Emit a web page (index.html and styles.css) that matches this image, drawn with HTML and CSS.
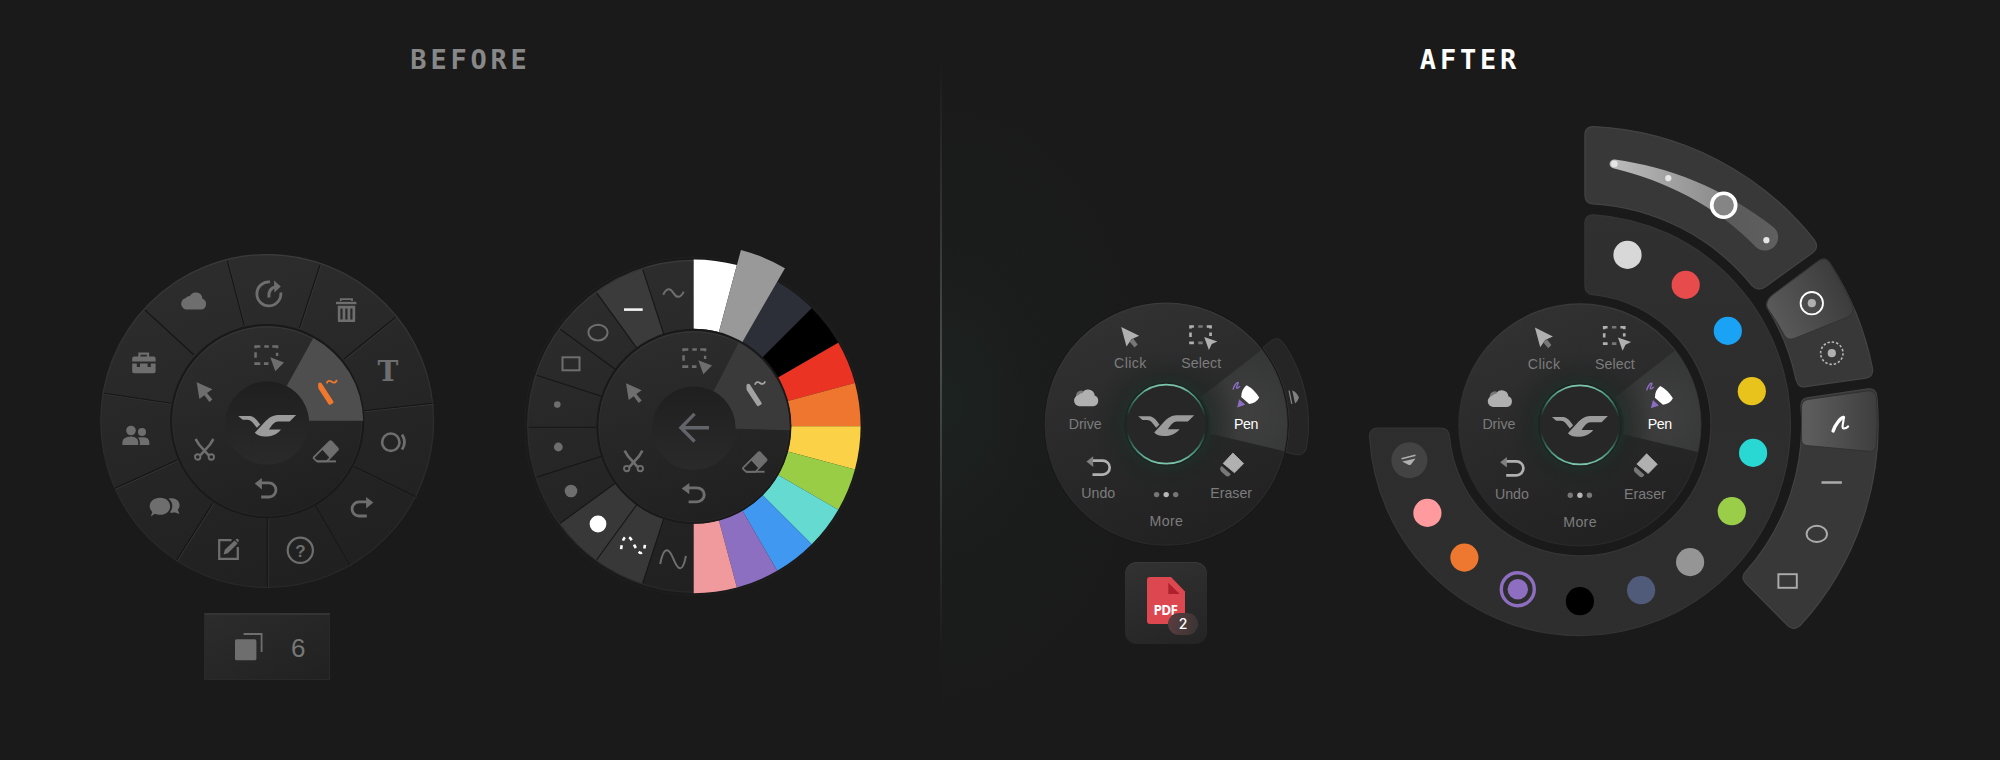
FILE: index.html
```html
<!DOCTYPE html>
<html lang="en">
<head>
<meta charset="utf-8">
<title>Radial menu: before and after</title>
<link rel="stylesheet" href="styles.css">
</head>
<body>

<svg class="defs" width="0" height="0" aria-hidden="true">
  <defs>
    <linearGradient id="disc" x1="0.3" y1="0" x2="0.6" y2="1"><stop offset="0" stop-color="#2d2d2d"/><stop offset="1" stop-color="#202020"/></linearGradient>
    <linearGradient id="knob" x1="0" y1="0" x2="0" y2="1"><stop offset="0" stop-color="#1f1f1f"/><stop offset="1" stop-color="#2a2a2a"/></linearGradient>
    <linearGradient id="edge" x1="0" y1="0" x2="0" y2="1"><stop offset="0" stop-color="#3b3b3b"/><stop offset="0.6" stop-color="#2b2b2b"/><stop offset="1" stop-color="#282828"/></linearGradient>
    <linearGradient id="disc2" x1="0.25" y1="0" x2="0.65" y2="1"><stop offset="0" stop-color="#323232"/><stop offset="1" stop-color="#212121"/></linearGradient>
    <radialGradient id="halo" gradientUnits="userSpaceOnUse" cx="0" cy="0" r="74"><stop offset="0.54" stop-color="#1d3029" stop-opacity="0.8"/><stop offset="0.7" stop-color="#1f2624" stop-opacity="0.5"/><stop offset="1" stop-color="#242424" stop-opacity="0"/></radialGradient>
    <linearGradient id="ring" x1="0" y1="0" x2="0" y2="1"><stop offset="0" stop-color="#7cc7ac"/><stop offset="0.12" stop-color="#4fa088"/><stop offset="0.28" stop-color="#285a4a"/><stop offset="0.4" stop-color="#1f2a27"/><stop offset="0.6" stop-color="#1f2a27"/><stop offset="0.72" stop-color="#285a4a"/><stop offset="0.88" stop-color="#4fa088"/><stop offset="1" stop-color="#7cc7ac"/></linearGradient>
    <radialGradient id="wedge" gradientUnits="userSpaceOnUse" cx="84" cy="-10" r="62"><stop offset="0" stop-color="#3f3f3f"/><stop offset="1" stop-color="#353736"/></radialGradient>
    <linearGradient id="track" gradientUnits="userSpaceOnUse" x1="30" y1="0" x2="198" y2="0"><stop offset="0" stop-color="#bcbcbc"/><stop offset="0.68" stop-color="#8a8a8a"/><stop offset="0.68" stop-color="#5a5a5a"/><stop offset="1" stop-color="#5f5f5f"/></linearGradient>
    <linearGradient id="band" x1="0" y1="0" x2="0" y2="1"><stop offset="0" stop-color="#303030"/><stop offset="0.4" stop-color="#2d2d2d"/><stop offset="1" stop-color="#2e2e2e"/></linearGradient>
    <linearGradient id="selA" gradientUnits="userSpaceOnUse" x1="196" y1="-100" x2="266" y2="-134"><stop offset="0" stop-color="#5a5a5a"/><stop offset="1" stop-color="#3c3c3c"/></linearGradient>
    <linearGradient id="selB" x1="0" y1="0" x2="1" y2="0"><stop offset="0.1" stop-color="#5c5c5c"/><stop offset="1" stop-color="#3e3e3e"/></linearGradient>

    <g id="i-logo">
      <path d="M28,-9H10.7C3.3,-8.7 0,-4.7 -3.7,-.7L-12,8.3C-7.7,13.7 7.3,13.3 13.3,5H1.7C4,2 6.3,-2.7 10.7,-2.7H21.7Z"/>
      <path d="M-28,-8H-17C-12,-8 -9,-2.5 -6.7,.3L-10,3.5C-13.3,-.7 -15.3,-4.2 -19.3,-4.2H-23.7Z"/>
    </g>
    <g id="i-select">
      <path d="M0,0H6V2.4H2.5V3H0ZM10,0H14.5V2.4H10ZM18,0H24V3H21.6V2.4H18ZM0,7H2.5V12.4H0ZM21.6,7.5H24V10.6H21.6ZM0,17H6V19.6H0ZM9.6,17H14.2V19.6H9.6Z"/>
      <path d="M16,12L29.7,17.3L21,26Z"/>
    </g>
    <path id="i-cursor" d="M0,0L15.7,7L10.3,10.7L15.7,17.3L12.7,19.7L7.7,13L2.7,16.7Z"/>
    <g id="i-scissors" fill="none" stroke="currentColor">
      <path d="M14.5,16.2L5,5.5L1.6,0M6.5,16.2L16,5.5L19.4,0" stroke-width="2.6"/>
      <circle cx="3.7" cy="18" r="2.7" stroke-width="1.9"/><circle cx="17.3" cy="18" r="2.7" stroke-width="1.9"/>
    </g>
    <g id="i-eraser" stroke="currentColor" stroke-linejoin="round">
      <path d="M1,17.4L16.8,1.6Q17.8,.8 18.8,1.6L25,8.4Q25.6,9.2 25,10L14,21.4H4.4L1,18.4Z" fill="none" stroke-width="1.8"/>
      <path d="M9.5,9L17.8,1.2L25.2,9.2L17,17.4Z" stroke-width="1"/>
      <path d="M4.4,21.4H23.3" stroke-width="2"/>
    </g>
    <g id="i-undo">
      <path d="M0,5.6L7.2,0V11.4Z" stroke="none"/>
      <path d="M6.5,4.9H14.2A7 7 0 0 1 14.2,19H6.5" fill="none" stroke="currentColor" stroke-width="2.8"/>
    </g>
    <g id="i-pen">
      <path d="M.2,4.6Q1.8,2.6 3.6,4.2L15.4,22.6Q15.8,23.6 14.8,24.3L12.4,25.7Q11.2,26.2 10.6,25.2L.4,9.6Q0,8 .2,4.6Z" fill="currentColor"/>
      <path d="M8.6,4.4C9.6,1.4 11.8,1.2 13.7,2.7S17.4,4.2 18.9,1" fill="none" stroke="currentColor" stroke-width="1.8"/>
    </g>
    <path id="i-cloud" d="M5.7,18.2A5.6 5.6 0 0 1 4.7,7.1A4.5 4.5 0 0 1 8.6,5A6.5 6.5 0 0 1 20.8,7.6A5.5 5.5 0 0 1 19.4,18.2Z"/>

    <g id="hub">
      <circle r="121" fill="url(#disc2)" stroke="url(#edge)" stroke-width="1.2"/>
      <path d="M95.3,-74.4L35,-27.3A44.4 44.4 0 0 1 43.3,9.3L118,27A121 121 0 0 0 95.3,-74.4Z" fill="url(#wedge)"/>
      <circle r="74" fill="url(#halo)"/>
      <circle r="42" fill="#1f2322"/>
      <circle r="39.5" fill="#272727" stroke="url(#ring)" stroke-width="1.7"/>
      <use href="#i-logo" fill="#9b9b9b"/>
      <path d="M-45,-97.3L-27,-88.5L-34.7,-85L-39.7,-77.7Z" fill="#b0b0b0"/>
      <path d="M-36.7,-82.6L-33,-85.6L-28.5,-79.8L-31.7,-76.7Z" fill="#777"/>
      <path d="M23,-99H27.7V-96.4H25.6V-95.6H23ZM40.5,-99H45.7V-95.6H43V-96.4H40.5ZM23,-91.7H25.6V-87.3H23ZM43,-91.7H45.7V-88.3H43ZM23,-82.7H27.7V-80H23Z" fill="#b0b0b0"/>
      <path d="M32,-99H36.5V-96.4H32ZM32,-82.7H36.5V-80H32Z" fill="#777"/>
      <path d="M38,-87.3L51.2,-82.8L45.6,-80.2L42.7,-74.2Z" fill="#b0b0b0"/>
      <circle cx="-85" cy="-28.5" r="5.2" fill="#777"/>
      <use href="#i-cloud" transform="translate(-92.3,-36.2)" fill="#b0b0b0"/>
      <path d="M-79.7,37.3L-73,32V42.7Z" fill="#808080"/>
      <path d="M-73.3,36.4H-63.5A7 7 0 0 1 -63.5,50.4H-73.7" fill="none" stroke="#b0b0b0" stroke-width="2.7"/>
      <g fill="#777"><circle cx="-9.6" cy="70.4" r="2.7"/><circle cx="9.5" cy="70.4" r="2.7"/></g><circle cx="0" cy="70.4" r="2.7" fill="#b8b8b8"/>
      <path d="M66.7,28.8L77.4,39.3L68.3,48.6L57,39.2Z" fill="#b0b0b0" stroke="#b0b0b0" stroke-width=".8" stroke-linejoin="round"/>
      <path d="M55.5,41.8L64.5,49.8C63.5,52.4 61.3,52.9 59.3,51.4L55,47.4C53.4,45.8 53.6,43.4 55.5,41.8Z" fill="#777"/>
      <path d="M80.4,-39Q88,-35 93,-26.7Q90,-21 83,-20.2L75,-27.2Q75,-35 80.4,-39Z" fill="#fff"/>
      <path d="M73,-24.9L79,-19.4L71,-16.7Z" fill="#8e6ec4"/>
      <path d="M66.8,-34.6C67.5,-38.5 71,-42.6 72,-41.6C72.7,-40.5 69,-36.4 70.7,-36Q72.3,-36 73.8,-38" fill="none" stroke="#8e6ec4" stroke-width="1.4"/>
    </g>
  </defs>
</svg>

<main class="compare">
  <section class="panel panel-before">
    <h2 class="title">BEFORE</h2>
    <div class="stage stage-before">
      <div class="menu menu-main">
        <svg width="340" height="342" viewBox="97 250 340 342">
          <circle cx="267.2" cy="421" r="166.4" fill="url(#disc)" stroke="url(#edge)" stroke-width="1.2"/>
          <g stroke="#363636" transform="translate(.8,.8)">
            <path id="spokes" d="M227.3,260.7L244.3,325.7M320,265L299.3,328.3M395.7,317.3L344,359M432.7,403.3L364,410.7M415.7,496.7L354.3,466.7M350,565L316,506M267.3,587L267.3,518.3M176.7,560L212.7,503.3M115,488.3L177.3,460M104.3,393.3L170.7,403.3M145,310L194,355"/>
          </g>
          <use href="#spokes" stroke="#151515" stroke-width="1.1"/>
          <circle cx="267.2" cy="421" r="96" fill="url(#disc)" stroke="#191919" stroke-width="2.2"/>
          <circle cx="267.2" cy="421.4" r="94.6" fill="none" stroke="url(#edge)" stroke-width=".8"/>
          <path d="M313.3,338A96 96 0 0 1 363.2,420.7H309A42 42 0 0 0 286.7,386Z" fill="#4e4e4e"/>
          <circle cx="267.2" cy="423" r="41.8" fill="url(#knob)"/>
          <use href="#i-logo" transform="translate(267.2,424.2) scale(1.035)" fill="#9b9b9b"/>
          <g class="muted">
            <use href="#i-select" transform="translate(254.3,345.3)"/>
            <use href="#i-cursor" transform="translate(196.7,382.3)"/>
            <use href="#i-scissors" transform="translate(194,439)"/>
            <use href="#i-eraser" transform="translate(312.7,440)"/>
            <use href="#i-undo" transform="translate(254.7,478)"/>
            <use href="#i-undo" transform="translate(373.3,497) scale(-1,1)"/>
            <use href="#i-cloud" transform="translate(181,290.8) scale(1.03)"/>
            <!-- history -->
            <path d="M270,281.9A12 12 0 1 0 280.8,292.5" fill="none" stroke="currentColor" stroke-width="2.8"/>
            <path d="M269,297.5Q268,288 276.5,286.6" fill="none" stroke="currentColor" stroke-width="3"/>
            <path d="M274,280.6L280.8,286.4L274.4,292.4Z"/>
            <!-- trash -->
            <path d="M340.8,301V299.2H352V301" fill="none" stroke="currentColor" stroke-width="1.8"/>
            <path d="M336,301.8H356.4V304.2H336Z"/>
            <path fill-rule="evenodd" d="M337.8,305.8H355.2V321Q355.2,322 354.2,322H338.8Q337.8,322 337.8,321ZM340.4,308.4V319.4H342.6V308.4ZM345.3,308.4V319.4H347.5V308.4ZM350.3,308.4V319.4H352.5V308.4Z"/>
            <!-- toolbox -->
            <path d="M139.4,357V353.6H148V357" fill="none" stroke="currentColor" stroke-width="2.2"/>
            <path d="M132.2,361.6V358.4Q132.2,356.6 134,356.6H153.8Q155.6,356.6 155.6,358.4V361.6ZM132.2,363.4H136.8V367H140V363.4H147.6V367H150.8V363.4H155.6V371.4Q155.6,373.2 153.8,373.2H134Q132.2,373.2 132.2,371.4Z"/>
            <!-- people -->
            <circle cx="131" cy="430.5" r="4.8"/><circle cx="142" cy="432" r="4"/>
            <path d="M122.4,445V442Q123,436.7 131,436.6Q137.6,436.7 138.2,442V445ZM139.8,445V441.4Q139.4,439 138,437.6Q148.6,435.8 149.3,441.4V445Z"/>
            <!-- chat -->
            <path d="M160,497.8C173.5,497.8 173.5,515 160,514.8Q157,514.8 154.8,513.8L150.8,516.6L152.3,512C146.5,506 151,497.8 160,497.8Z"/>
            <path d="M168.6,498.6C177,496.4 182.6,504 177.8,509.6L179.4,514L174.4,512.2Q172.2,513 169.8,512.6C173.6,507.6 173,502.4 168.6,498.6Z"/>
            <!-- edit -->
            <path d="M231.5,540.2H219.2V558.8H237.8V547" fill="none" stroke="currentColor" stroke-width="2.2"/>
            <path d="M223.6,554.4L224.8,549.8L234.6,540.6L237.6,543.6L227.8,553.2ZM235.6,539.8L236.8,538.8Q238,538.6 238.6,539.6Q239.3,541 238.4,541.8L238,542.4Z"/>
            <!-- help -->
            <circle cx="300.3" cy="550.3" r="12.6" fill="none" stroke="currentColor" stroke-width="2.2"/>
            <!-- laser -->
            <circle cx="390.8" cy="442.2" r="8.7" fill="none" stroke="currentColor" stroke-width="2.6"/>
            <path d="M402,434.6Q407,442 402,449.6" fill="none" stroke="currentColor" stroke-width="2.8"/>
            <text class="glyph-t" x="388" y="381.4">T</text>
            <text class="glyph-q" x="300.4" y="556.8">?</text>
          </g>
          <use href="#i-pen" transform="translate(318,379)" color="#f0772d"/>
        </svg>
        <div class="pages">
          <svg width="28" height="28" viewBox="0 0 28 28">
            <rect x="0" y="6.3" width="21.4" height="21" rx="1.6" fill="#6e6e6e"/>
            <path d="M8.6,1H26.6V19" fill="none" stroke="#6e6e6e" stroke-width="1.8"/>
          </svg>
          <span class="pages-count">6</span>
        </div>
      </div>

      <svg class="menu-colors" width="350" height="360" viewBox="520 240 350 360">
        <g transform="translate(693.7,426.3)">
          <circle r="169" fill="#1a1a1a" stroke="#1e1e1e" stroke-width="1.4"/>
          <circle r="166" fill="url(#disc)" stroke="url(#edge)" stroke-width="1.2"/>
          <g class="seg">
            <circle r="131.5" pathLength="360" stroke-dasharray="18 342" transform="rotate(234)" stroke="#3b3b3b"/>
            <circle r="131.5" pathLength="360" stroke-dasharray="36 324" transform="rotate(108)" stroke="#383838"/>
          </g>
          <g stroke="#161616" stroke-width="1.1">
            <path d="M97,0H165" transform="rotate(108)"/><path d="M97,0H165" transform="rotate(126)"/><path d="M97,0H165" transform="rotate(144)"/><path d="M97,0H165" transform="rotate(162)"/><path d="M97,0H165" transform="translate(0,1) rotate(180)"/><path d="M97,0H165" transform="rotate(198)"/><path d="M97,0H165" transform="rotate(216)"/><path d="M97,0H165" transform="rotate(234)"/><path d="M97,0H165" transform="rotate(252)"/>
          </g>
          <g class="swatch">
            <circle r="132.2" pathLength="360" transform="rotate(-90)" stroke="#fff"/>
            <circle r="132.2" pathLength="360" transform="rotate(-60)" stroke="#2c2f38"/>
            <circle r="132.2" pathLength="360" transform="rotate(-45)" stroke="#000"/>
            <circle r="132.2" pathLength="360" transform="rotate(-30)" stroke="#ea3323"/>
            <circle r="132.2" pathLength="360" transform="rotate(-15)" stroke="#ee762e"/>
            <circle r="132.2" pathLength="360" stroke="#fbd148"/>
            <circle r="132.2" pathLength="360" transform="rotate(15)" stroke="#9acd46"/>
            <circle r="132.2" pathLength="360" transform="rotate(30)" stroke="#64dad0"/>
            <circle r="132.2" pathLength="360" transform="rotate(45)" stroke="#4098f0"/>
            <circle r="132.2" pathLength="360" transform="rotate(60)" stroke="#8c6fc0"/>
            <circle r="132.2" pathLength="360" transform="rotate(75)" stroke="#f09a9e"/>
            <circle class="picked" r="139.6" pathLength="360" transform="rotate(-75)" stroke="#999"/>
          </g>
          <circle cx=".2" r="96.4" fill="url(#disc)" stroke="#191919" stroke-width="2.2"/>
          <circle cx=".2" cy=".4" r="95" fill="none" stroke="url(#edge)" stroke-width=".8"/>
          <path d="M45,-84A95.6 95.6 0 0 1 96,4L41.6,2.4A42 42 0 0 0 20,-35.3Z" fill="#3a3a3a"/>
          <circle cx="0" cy="2" r="41.8" fill="url(#knob)"/>
          <path d="M15.3,1.4H-12M.9,-12.4L-12.8,1.4L.9,15.2" fill="none" stroke="#62646a" stroke-width="3.4"/>
          <g class="muted">
            <use href="#i-select" transform="translate(-11.4,-78)"/>
            <use href="#i-cursor" transform="translate(-67.7,-43)"/>
            <use href="#i-scissors" transform="translate(-70.7,24.3)"/>
            <use href="#i-eraser" transform="translate(48.3,24.7) scale(.97)"/>
            <use href="#i-undo" transform="translate(-12,56.6) scale(1.06,1)"/>
            <circle cx="-136.4" cy="-21.7" r="3.3"/><circle cx="-135.4" cy="20.7" r="4.4"/><circle cx="-122.7" cy="64.7" r="6.3"/>
            <g fill="none" stroke="currentColor" stroke-width="2">
              <path d="M-30.5,-131.6C-27,-138.6 -23.5,-138.4 -20.2,-133.2S-13,-128 -10,-134.6"/>
              <ellipse cx="-95.7" cy="-93.7" rx="9.6" ry="7.8"/>
              <rect x="-131.2" y="-69" width="17" height="13"/>
              <path d="M-33.5,137.7C-30,119.5 -25,121 -20.3,132.6S-11,147 -7.8,129.6"/>
            </g>
          </g>
          <circle cx="-95.7" cy="97.7" r="8.4" fill="#fff"/>
          <path d="M-69.7,-116.7H-51" stroke="#f2f2f2" stroke-width="2.6"/>
          <path d="M-72.6,122.8C-70.5,106 -64.5,108 -60.3,117S-50.5,133 -48.6,117.5" fill="none" stroke="#fff" stroke-width="2.6" stroke-dasharray="3.8 4.8"/>
          <use href="#i-pen" transform="translate(52.6,-46)" color="#a2a2a2"/>
        </g>
      </svg>
    </div>
  </section>

  <section class="panel panel-after">
    <h2 class="title title-strong">AFTER</h2>
    <div class="stage stage-after">
      <div class="menu menu-compact">
        <svg width="275" height="252" viewBox="1040 298 275 252">
          <g transform="translate(1166.2,424.2)">
            <path d="M96.7,-76.7L105,-83.5Q112,-88.5 117.5,-81A142.5 142.5 0 0 1 140.3,23.5Q138,32.2 129,30.3L119.5,28A123 123 0 0 0 96.7,-76.7Z" fill="#252525" stroke="#303030"/>
            <circle r="122.4" fill="#171717"/>
            <use href="#hub"/>
            <path d="M126,-33.6Q130,-32.5 132.8,-26.8Q131.6,-22.8 128.8,-20.7Z" fill="#808080"/>
            <path d="M122.9,-33.6L125.6,-20.4" stroke="#808080" stroke-width="1.3"/>
            <g class="labels">
              <text x="-36" y="-56" textLength="32.3">Click</text><text x="35" y="-56" textLength="39.8">Select</text>
              <text x="-81" y="4.4" textLength="33">Drive</text><text class="on" x="80" y="4.4" textLength="24.4">Pen</text>
              <text x="-68" y="74" textLength="34">Undo</text><text x="65" y="74" textLength="41.8">Eraser</text>
              <text x="0" y="102" textLength="33.4">More</text>
            </g>
          </g>
        </svg>
        <div class="file">
          <svg width="82" height="82" viewBox="0 0 82 82">
            <path d="M25,15H46L60,29.5V59Q60,62 57,62H25Q22,62 22,59V18Q22,15 25,15Z" fill="#dd4850"/>
            <path d="M43.3,20.7V32H54.7Z" fill="#b0212e"/>
            <text class="pdf" x="40.6" y="53.4" textLength="24.4">PDF</text>
          </svg>
          <span class="badge">2</span>
        </div>
      </div>

      <svg width="520" height="520" viewBox="1364 120 520 520">
        <g transform="translate(1579.9,424.9)">
          <path d="M5,-202Q5,-210.6 14,-210.1A210.6 210.6 0 1 1 -210.3,12Q-210.6,3.3 -202,3.3H-139.5Q-131,3.3 -130.4,12A131 131 0 1 0 13,-130.3Q5,-131 5,-139.5Z" fill="url(#band)" stroke="#353535" stroke-width="1.2"/>
          <g class="fly">
            <path d="M5,-290Q5,-298.7 14,-298.3A298.6 298.6 0 0 1 234,-185.5Q240,-177.5 232.5,-172L186,-138.5Q178.5,-133 172.5,-138.8A221.5 221.5 0 0 0 13,-221.1Q5,-221.5 5,-230Z"/>
            <path d="M194,-131L238,-163.5Q245.5,-169 250,-161.5A297.5 297.5 0 0 1 292.7,-56Q293.6,-48.5 286,-46.7L224,-38Q218,-37 215.8,-46.5A221 221 0 0 0 187.5,-117Q184.5,-124 194,-131Z"/>
            <path d="M221,-19Q221,-26 227,-27L288,-36Q296.5,-37 297,-28A298 298 0 0 1 220.5,200.5Q214,206.5 208,201L165.5,158Q160.5,152 165.5,147A221 221 0 0 0 221,-19Z"/>
          </g>
          <path d="M194,-131L238,-163.5Q245.5,-169 250,-161.5A297.5 297.5 0 0 1 272.7,-119Q275,-111 267.5,-107.7L214.5,-86.5Q208,-84 204.5,-89.5A221 221 0 0 0 187.5,-117Q184.5,-124 194,-131Z" fill="url(#selA)" stroke="#2e2e2e" stroke-width=".8"/>
          <path d="M221.6,-17Q221.6,-24.4 228,-25.4L288,-34Q295.8,-34.6 296.6,-27A298 298 0 0 1 296.3,20Q295.5,27 289,26.4L226,20.5Q221,19 221.6,13Z" fill="url(#selB)" stroke="#2e2e2e" stroke-width=".8"/>

          <path d="M35,-265.4C88,-258 142,-238 194,-197.5A13 13 0 0 1 176,-178C134,-221 85,-244 33.3,-256.7A4.4 4.4 0 0 1 35,-265.4Z" fill="url(#track)"/>
          <g fill="#e6e6e6"><circle cx="34.5" cy="-261" r="3.3"/><circle cx="88.4" cy="-246.7" r="3.1"/><circle cx="186.5" cy="-184.7" r="3.1"/></g>
          <circle cx="143.8" cy="-219.7" r="12" fill="#858585" stroke="#fff" stroke-width="3.6"/>

          <g fill="#b0b0b0"><circle cx="231.9" cy="-121.7" r="4.1"/><circle cx="251.9" cy="-71.7" r="4.1"/></g>
          <circle cx="231.9" cy="-121.7" r="11.2" fill="none" stroke="#fff" stroke-width="1.8"/>
          <circle cx="251.9" cy="-71.7" r="11.2" fill="none" stroke="#b8b8b8" stroke-width="1.6" pathLength="64" stroke-dasharray="2.2 1.8"/>
          <path d="M253.2,6C255,0 261,-7.4 263.6,-7.4" fill="none" stroke="#fff" stroke-width="3.4" stroke-linecap="round"/>
          <path d="M263.4,-8C265,-5 260.5,3.4 264,3.6Q266.4,3.6 268.2,1.6" fill="none" stroke="#fff" stroke-width="2.2" stroke-linecap="round"/>
          <g fill="none" stroke="#acacac" stroke-width="1.9">
            <path d="M241.6,57.6H262" stroke-width="2.5"/>
            <ellipse cx="236.9" cy="109" rx="10.2" ry="8.1"/>
            <rect x="198.5" y="149.3" width="18.4" height="13.6"/>
          </g>

          <circle cx="47.6" cy="-170" r="14.1" fill="#d8d8d8"/>
          <circle cx="105.8" cy="-140" r="14.1" fill="#e84b4b"/>
          <circle cx="147.9" cy="-94" r="14.1" fill="#1aa2f5"/>
          <circle cx="171.9" cy="-33.7" r="14.1" fill="#e7c31c"/>
          <circle cx="173.2" cy="28" r="14.1" fill="#29d8d3"/>
          <circle cx="151.9" cy="86.3" r="14.1" fill="#9ace49"/>
          <circle cx="110.2" cy="137.2" r="14.1" fill="#959595"/>
          <circle cx="61.2" cy="165.3" r="14.1" fill="#505a79"/>
          <circle cx="0" cy="176.3" r="14.1" fill="#000"/>
          <circle cx="-62.1" cy="164.3" r="10.2" fill="#8d6ec0"/>
          <circle cx="-62.1" cy="164.3" r="16.5" fill="none" stroke="#8d6ec0" stroke-width="3.4"/>
          <circle cx="-115.5" cy="132.7" r="14.1" fill="#ee782f"/>
          <circle cx="-152.5" cy="88" r="14.1" fill="#ff9a9e"/>
          <circle cx="-170.5" cy="35.3" r="18" fill="#434343"/>
          <path d="M-178.3,33.8L-164.4,30.3" stroke="#b0b0b0" stroke-width="1.4"/>
          <path d="M-177.7,36.6L-164.3,33.7L-169,39.6Q-170,40.6 -171.6,39.8Z" fill="#b0b0b0"/>

          <circle r="121.5" fill="#1a1a1a"/>
          <use href="#hub"/>
          <g class="labels">
            <text x="-36" y="-56" textLength="32.3">Click</text><text x="35" y="-56" textLength="39.8">Select</text>
            <text x="-81" y="4.4" textLength="33">Drive</text><text class="on" x="80" y="4.4" textLength="24.4">Pen</text>
            <text x="-68" y="74" textLength="34">Undo</text><text x="65" y="74" textLength="41.8">Eraser</text>
            <text x="0" y="102" textLength="33.4">More</text>
          </g>
        </g>
      </svg>
    </div>
  </section>
</main>
</body>
</html>
```

FILE: styles.css
```css
* { box-sizing: border-box; }
body {
  margin: 0;
  background: #1a1a1a;
  color: #888;
  font-family: "Liberation Sans", Arial, sans-serif;
  overflow: hidden;
}
svg { display: block; flex: none; }
.defs { position: absolute; }
.compare { display: flex; width: 2000px; height: 760px; }
.panel { display: flex; flex-direction: column; padding-top: 45px; }
.panel-before { width: 940px; }
.panel-after {
  width: 1060px;
  background:
    linear-gradient(to bottom, rgba(72, 76, 74, 0) 8%, #484c4a 48%, rgba(72, 76, 74, 0) 86%) left top / 2px 100% no-repeat,
    radial-gradient(ellipse 230px 340px at 0 53%, rgba(29, 38, 35, 0.75), rgba(28, 31, 30, 0.35) 45%, rgba(26, 26, 26, 0) 100%);
}
.title {
  margin: 0;
  height: 30px;
  line-height: 30px;
  text-align: center;
  font-family: "DejaVu Sans Mono", monospace;
  font-weight: 700;
  font-size: 27px;
  letter-spacing: 3.8px;
  color: #888;
}
.panel-before .title { padding-left: 1px; }
.title-strong { color: #fff; }

.stage { display: flex; align-items: flex-start; }
.stage-before { padding: 165px 0 0 97px; gap: 83px; }
.stage-after { padding: 45px 0 0 100px; gap: 49px; }
.menu { display: flex; flex-direction: column; }
.menu-main { margin-top: 10px; gap: 21px; }
.menu-compact { margin-top: 178px; gap: 12px; }

.muted { color: #6e6e6e; fill: #6e6e6e; }
.seg circle { fill: none; stroke-width: 68px; }
.swatch circle { fill: none; stroke-width: 69.4px; stroke-dasharray: 15 345; }
.swatch .picked { stroke-width: 86px; }
.glyph-t { font: 700 28px "DejaVu Serif", serif; text-anchor: middle; }
.glyph-q { font: 700 17px "Liberation Sans", sans-serif; text-anchor: middle; }

.fly path { fill: #383838; stroke: #434343; stroke-width: 1.2px; }

.pages {
  display: flex;
  align-items: center;
  width: 126px;
  height: 67px;
  margin-left: 107px;
  padding-left: 30px;
  gap: 28px;
  background: linear-gradient(150deg, #2c2c2c, #212121);
  border: 1px solid #292929;
  border-top: 2px solid #343434;
}
.pages-count { font: 300 26px/1 "Liberation Sans", sans-serif; color: #777; padding-top: 2px; }

.labels text { font-size: 14.2px; fill: #7c7c7c; text-anchor: middle; }
.labels .on { fill: #fff; }

.file {
  position: relative;
  width: 82px;
  height: 82px;
  margin-left: 85px;
  border-radius: 12px;
  background: linear-gradient(160deg, #323232, #242424);
  box-shadow: inset 0 1px 1px #3a3a3a;
}
.pdf { font: 700 13.5px "Open Sans", sans-serif; fill: #fff; text-anchor: middle; }
.badge {
  position: absolute;
  left: 43px;
  top: 51px;
  width: 30px;
  height: 22px;
  border-radius: 11px;
  background: linear-gradient(100deg, #5a3d3f, #3a3434);
  color: #fff;
  font: 500 14px/22px Inter, sans-serif;
  text-align: center;
}
```
